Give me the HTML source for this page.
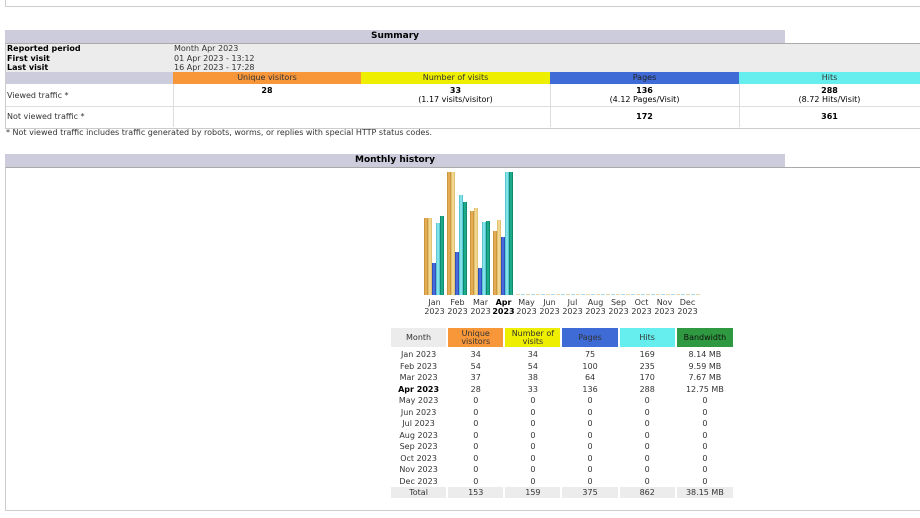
<!DOCTYPE html>
<html><head><meta charset="utf-8"><style>
body{margin:0;width:920px;height:518px;background:#fff;font-family:"DejaVu Sans","Liberation Sans",sans-serif;font-size:8px;color:#000;position:relative;overflow:hidden}
.a{position:absolute}
.t{position:absolute;background:#ccccdd;font-weight:bold;font-size:9px;text-align:center;line-height:13px;height:13px}
.c{position:absolute;text-align:center;line-height:10px}
.b{position:absolute;bottom:223px;width:4px}
.u{background:linear-gradient(90deg,#c08a30,#f0b860,#c08a30)}
.v{background:linear-gradient(90deg,#d8b860,#f8e0a0,#d8b860)}
.p{background:linear-gradient(90deg,#2244aa,#5577ee,#2244aa)}
.h{background:linear-gradient(90deg,#44bbcc,#99eef0,#44bbcc)}
.w{background:linear-gradient(90deg,#0a7a60,#22bb99,#0a7a60)}
.ml{position:absolute;top:298px;width:23px;text-align:center;line-height:9px;color:#333}
table{border-collapse:separate;border-spacing:2px 0;table-layout:fixed;width:346px}
td{padding:0;overflow:hidden;white-space:nowrap}
</style></head><body>
<div class="a" style="left:5px;top:0;width:915px;height:6px;border-bottom:1px solid #ccc;border-left:1px solid #ccc"></div>

<div class="t" style="left:5px;top:30px;width:780px">Summary</div>
<div class="a" style="left:5px;top:43px;width:915px;height:84px;border-top:1px solid #aaa;border-bottom:1px solid #ccc;border-left:1px solid #ccc"></div>
<div class="a" style="left:6px;top:44px;width:914px;height:28px;background:#ececec"></div>
<div class="a" style="left:7px;top:44px;line-height:9.5px;font-weight:bold">Reported period<br>First visit<br>Last visit</div>
<div class="a" style="left:174px;top:44px;line-height:9.5px;color:#333">Month Apr 2023<br>01 Apr 2023 - 13:12<br>16 Apr 2023 - 17:28</div>
<div class="a" style="left:6px;top:72px;width:167px;height:12px;background:#ccccdd"></div>
<div class="c" style="left:173px;top:72px;width:188px;height:12px;line-height:12px;background:#f8973a;color:#333">Unique visitors</div>
<div class="c" style="left:361px;top:72px;width:189px;height:12px;line-height:12px;background:#eeee00;color:#333">Number of visits</div>
<div class="c" style="left:550px;top:72px;width:189px;height:12px;line-height:12px;background:#3f6bd6;color:#222">Pages</div>
<div class="c" style="left:739px;top:72px;width:181px;height:12px;line-height:12px;background:#66eeee;color:#333">Hits</div>
<div class="a" style="left:6px;top:106px;width:914px;border-top:1px solid #ddd"></div>
<div class="a" style="left:173px;top:84px;height:43px;border-left:1px solid #ddd"></div>
<div class="a" style="left:550px;top:84px;height:43px;border-left:1px solid #ddd"></div>
<div class="a" style="left:739px;top:84px;height:43px;border-left:1px solid #ddd"></div>
<div class="a" style="left:7px;top:91px;color:#333">Viewed traffic *</div>
<div class="a" style="left:7px;top:112px;color:#333">Not viewed traffic *</div>
<div class="c" style="left:173px;top:86px;width:188px"><b>28</b></div>
<div class="c" style="left:361px;top:86px;width:189px;line-height:9px"><b>33</b><br>(1.17 visits/visitor)</div>
<div class="c" style="left:550px;top:86px;width:189px;line-height:9px"><b>136</b><br>(4.12 Pages/Visit)</div>
<div class="c" style="left:739px;top:86px;width:181px;line-height:9px"><b>288</b><br>(8.72 Hits/Visit)</div>
<div class="c" style="left:550px;top:112px;width:189px"><b>172</b></div>
<div class="c" style="left:739px;top:112px;width:181px"><b>361</b></div>
<div class="a" style="left:6px;top:128px;color:#333">* Not viewed traffic includes traffic generated by robots, worms, or replies with special HTTP status codes.</div>

<div class="t" style="left:5px;top:154px;width:780px">Monthly history</div>
<div class="a" style="left:5px;top:167px;width:915px;height:342px;border-top:1px solid #aaa;border-bottom:1px solid #ccc;border-left:1px solid #ccc"></div>

<div class="b u" style="left:424px;height:77px"></div><div class="b v" style="left:428px;height:77px"></div><div class="b p" style="left:432px;height:32px"></div><div class="b h" style="left:436px;height:72px"></div><div class="b w" style="left:440px;height:79px"></div>
<div class="b u" style="left:447px;height:123px"></div><div class="b v" style="left:451px;height:123px"></div><div class="b p" style="left:455px;height:43px"></div><div class="b h" style="left:459px;height:100px"></div><div class="b w" style="left:463px;height:93px"></div>
<div class="b u" style="left:470px;height:84px"></div><div class="b v" style="left:474px;height:87px"></div><div class="b p" style="left:478px;height:27px"></div><div class="b h" style="left:482px;height:73px"></div><div class="b w" style="left:486px;height:74px"></div>
<div class="b u" style="left:493px;height:64px"></div><div class="b v" style="left:497px;height:75px"></div><div class="b p" style="left:501px;height:58px"></div><div class="b h" style="left:505px;height:123px"></div><div class="b w" style="left:509px;height:123px"></div>
<div class="a" style="left:516px;top:294px;width:184px;height:1px;background:repeating-linear-gradient(90deg,#e8d8a8 0 4px,#fff 4px 5px,#a8dede 5px 9px,#fff 9px 10px)"></div>

<div class="ml" style="left:423px">Jan<br>2023</div>
<div class="ml" style="left:446px">Feb<br>2023</div>
<div class="ml" style="left:469px">Mar<br>2023</div>
<div class="ml" style="left:492px;font-weight:bold;color:#000">Apr<br>2023</div>
<div class="ml" style="left:515px">May<br>2023</div>
<div class="ml" style="left:538px">Jun<br>2023</div>
<div class="ml" style="left:561px">Jul<br>2023</div>
<div class="ml" style="left:584px">Aug<br>2023</div>
<div class="ml" style="left:607px">Sep<br>2023</div>
<div class="ml" style="left:630px">Oct<br>2023</div>
<div class="ml" style="left:653px">Nov<br>2023</div>
<div class="ml" style="left:676px">Dec<br>2023</div>

<table class="a" style="left:389px;top:328px;color:#333;font-size:8px;text-align:center">
<tr style="height:19px;line-height:8px">
<td style="width:55px;background:#ececec">Month</td>
<td style="width:55px;background:#f8973a">Unique<br>visitors</td>
<td style="width:55px;background:#eeee00">Number of<br>visits</td>
<td style="width:55px;background:#3f6bd6">Pages</td>
<td style="width:55px;background:#66eeee">Hits</td>
<td style="width:56px;background:#2e9940;color:#111">Bandwidth</td></tr>
<tr style="height:2px"><td colspan="6"></td></tr>
<tr style="height:11.5px"><td>Jan 2023</td><td>34</td><td>34</td><td>75</td><td>169</td><td>8.14 MB</td></tr>
<tr style="height:11.5px"><td>Feb 2023</td><td>54</td><td>54</td><td>100</td><td>235</td><td>9.59 MB</td></tr>
<tr style="height:11.5px"><td>Mar 2023</td><td>37</td><td>38</td><td>64</td><td>170</td><td>7.67 MB</td></tr>
<tr style="height:11.5px"><td style="font-weight:bold;color:#000">Apr 2023</td><td>28</td><td>33</td><td>136</td><td>288</td><td>12.75 MB</td></tr>
<tr style="height:11.5px"><td>May 2023</td><td>0</td><td>0</td><td>0</td><td>0</td><td>0</td></tr>
<tr style="height:11.5px"><td>Jun 2023</td><td>0</td><td>0</td><td>0</td><td>0</td><td>0</td></tr>
<tr style="height:11.5px"><td>Jul 2023</td><td>0</td><td>0</td><td>0</td><td>0</td><td>0</td></tr>
<tr style="height:11.5px"><td>Aug 2023</td><td>0</td><td>0</td><td>0</td><td>0</td><td>0</td></tr>
<tr style="height:11.5px"><td>Sep 2023</td><td>0</td><td>0</td><td>0</td><td>0</td><td>0</td></tr>
<tr style="height:11.5px"><td>Oct 2023</td><td>0</td><td>0</td><td>0</td><td>0</td><td>0</td></tr>
<tr style="height:11.5px"><td>Nov 2023</td><td>0</td><td>0</td><td>0</td><td>0</td><td>0</td></tr>
<tr style="height:11.5px"><td>Dec 2023</td><td>0</td><td>0</td><td>0</td><td>0</td><td>0</td></tr>
<tr style="height:11px"><td style="background:#ececec">Total</td><td style="background:#ececec">153</td><td style="background:#ececec">159</td><td style="background:#ececec">375</td><td style="background:#ececec">862</td><td style="background:#ececec">38.15 MB</td></tr>
</table>
</body></html>
